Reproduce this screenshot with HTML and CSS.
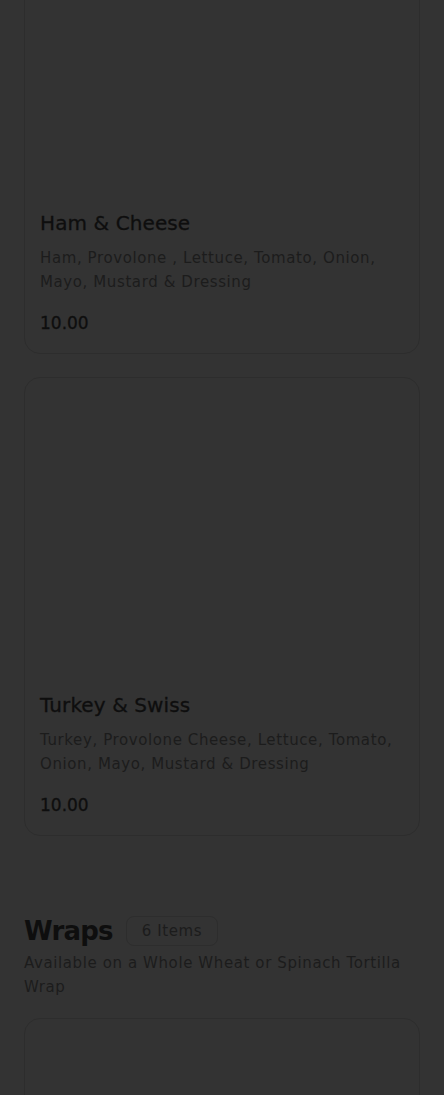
FILE: index.html
```html
<!DOCTYPE html>
<html lang="en">
<head>
  <meta charset="UTF-8">
  <title>Menu</title>
  <link rel="stylesheet" href="styles.css">
</head>
<body>
  <div class="page">
    <div class="item">
      <div class="item-img"></div>
      <div class="item-body">
        <h3>Ham &amp; Cheese</h3>
        <p class="desc">Ham, Provolone , Lettuce, Tomato, Onion, Mayo, Mustard &amp; Dressing</p>
        <p class="price">10.00</p>
      </div>
    </div>
    <div class="item">
      <div class="item-img"></div>
      <div class="item-body">
        <h3>Turkey &amp; Swiss</h3>
        <p class="desc">Turkey, Provolone Cheese, Lettuce, Tomato, Onion, Mayo, Mustard &amp; Dressing</p>
        <p class="price">10.00</p>
      </div>
    </div>

    <div class="section">
      <div class="section-head">
        <h2>Wraps</h2>
        <span class="count">6 Items</span>
      </div>
      <p class="section-desc">Available on a Whole Wheat or Spinach Tortilla Wrap</p>
    </div>
    <div class="item">
      <div class="item-img"></div>
    </div>
  </div>
</body>
</html>
```

FILE: styles.css
```css
html, body {
  margin: 0;
  background: #333333;
}
body {
  font-family: "DejaVu Sans", sans-serif;
  color: #111;
  overflow: hidden;
}
.page {
  padding: 0 24px;
  margin-top: -105px;
}
.item {
  border: 1px solid #2d2d2d;
  border-radius: 16px;
  margin-bottom: 23px;
}
.item-img {
  height: 300px;
}
.item-body {
  padding: 15px 15px 18px;
}
.item h3 {
  margin: 0 0 11px;
  font-size: 20px;
  font-weight: 500;
  line-height: 24px;
  color: #0e0e0e;
  letter-spacing: 0.1px;
  -webkit-text-stroke: 0.3px #0e0e0e;
}
.desc {
  margin: 0 0 17px;
  font-size: 15px;
  line-height: 24px;
  color: #1c1c1c;
  letter-spacing: 0.6px;
}
.price {
  margin: 0;
  font-size: 17px;
  line-height: 24px;
  font-weight: 500;
  color: #0e0e0e;
  -webkit-text-stroke: 0.3px #0e0e0e;
}
.section {
  padding-top: 55px;
  margin-bottom: 19px;
}
.section-head {
  display: flex;
  align-items: center;
  gap: 13px;
}
.section h2 {
  margin: 0;
  font-size: 26px;
  font-weight: 600;
  line-height: 34px;
  letter-spacing: -0.8px;
  color: #0e0e0e;
}
.count {
  border: 1px solid #2d2d2d;
  border-radius: 8px;
  padding: 5px 15px;
  font-size: 15px;
  letter-spacing: 0.6px;
  color: #1c1c1c;
}
.section-desc {
  margin: 3px 0 0;
  font-size: 15px;
  line-height: 24px;
  color: #1c1c1c;
  letter-spacing: 0.6px;
}
```
